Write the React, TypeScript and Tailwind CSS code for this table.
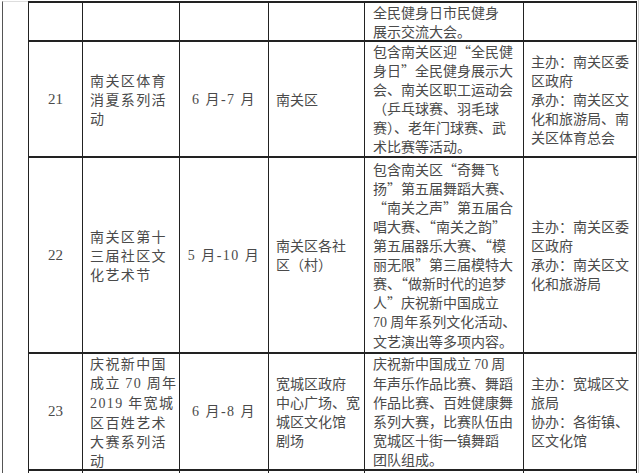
import React from 'react';

type Row = {
  h: string;
  no: string;
  name: string[];
  date: string;
  place: string[];
  content: string[];
  org: string[];
};

// 数字用衬线体，其余用中文字体
const withDigits = (s: string) =>
  s.split(/(\d+)/).map((part, i) =>
    /^\d+$/.test(part) ? (
      <span key={i} className="font-['Liberation_Serif',serif]">
        {part}
      </span>
    ) : (
      <React.Fragment key={i}>{part}</React.Fragment>
    )
  );

const rows: Row[] = [
  {
    h: 'h-[116px]',
    no: '21',
    name: ['南关区体育', '消夏系列活', '动'],
    date: '6 月-7 月',
    place: ['南关区'],
    content: [
      '包含南关区迎“全民健',
      '身日”全民健身展示大',
      '会、南关区职工运动会',
      '（乒乓球赛、羽毛球',
      '赛）、老年门球赛、武',
      '术比赛等活动。',
    ],
    org: ['主办：南关区委', '区政府', '承办：南关区文', '化和旅游局、南', '关区体育总会'],
  },
  {
    h: 'h-[196px]',
    no: '22',
    name: ['南关区第十', '三届社区文', '化艺术节'],
    date: '5 月-10 月',
    place: ['南关区各社', '区（村）'],
    content: [
      '包含南关区“奇舞飞',
      '扬”第五届舞蹈大赛、',
      '“南关之声”第五届合',
      '唱大赛、“南关之韵”',
      '第五届器乐大赛、“模',
      '丽无限”第三届模特大',
      '赛、“做新时代的追梦',
      '人”庆祝新中国成立',
      '70 周年系列文化活动、',
      '文艺演出等多项内容。',
    ],
    org: ['主办：南关区委', '区政府', '承办：南关区文', '化和旅游局'],
  },
  {
    h: 'h-[117px]',
    no: '23',
    name: ['庆祝新中国', '成立 70 周年', '2019 年宽城', '区百姓艺术', '大赛系列活', '动'],
    date: '6 月-8 月',
    place: ['宽城区政府', '中心广场、宽', '城区文化馆', '剧场'],
    content: [
      '庆祝新中国成立 70 周',
      '年声乐作品比赛、舞蹈',
      '作品比赛、百姓健康舞',
      '系列大赛，比赛队伍由',
      '宽城区十街一镇舞蹈',
      '团队组成。',
    ],
    org: ['主办：宽城区文', '旅局', '协办：各街镇、', '区文化馆'],
  },
];

const cell = 'border-r border-b-2 border-[#222] flex flex-col justify-center';

function Lines({ lines }: { lines: string[] }) {
  return (
    <>
      {lines.map((l, i) => (
        <span key={i} className="block whitespace-nowrap">
          {withDigits(l)}
        </span>
      ))}
    </>
  );
}

export default function App() {
  return (
    <div className="w-[640px] h-[473px] bg-white overflow-hidden flex text-[14px] leading-[19px] text-[#4a4a4a] font-['Noto_Sans_CJK_SC',sans-serif]">
      {/* 左侧页边线 */}
      <div className="ml-[2px] w-[26px] shrink-0 border-l-[1.5px] border-[#555] border-t border-t-[#ddd] mt-[1px]" />

      <div className="pt-[1px] shrink-0">
        <div className="grid grid-cols-[54px_97px_89px_96px_159px_113px] border-l border-t-2 border-[#222]">
          {/* 上一行的尾部 */}
          <div className={`${cell} h-[39px]`} />
          <div className={`${cell} h-[39px]`} />
          <div className={`${cell} h-[39px]`} />
          <div className={`${cell} h-[39px]`} />
          <div className={`${cell} h-[39px] pl-[8px]`}>
            <Lines lines={['全民健身日市民健身', '展示交流大会。']} />
          </div>
          <div className={`${cell} h-[39px]`} />

          {rows.map((r) => (
            <React.Fragment key={r.no}>
              <div className={`${cell} ${r.h} items-center font-['Liberation_Serif',serif] text-[15px]`}>
                {r.no}
              </div>
              <div className={`${cell} ${r.h} pl-[7px] tracking-[1.4px]`}>
                <Lines lines={r.name} />
              </div>
              <div className={`${cell} ${r.h} items-center font-['Liberation_Serif','Noto_Sans_CJK_SC',serif] tracking-[1.5px]`}>
                <span className="whitespace-nowrap">{r.date}</span>
              </div>
              <div className={`${cell} ${r.h} pl-[7px]`}>
                <Lines lines={r.place} />
              </div>
              <div className={`${cell} ${r.h} pl-[8px]`}>
                <Lines lines={r.content} />
              </div>
              <div className={`${cell} ${r.h} pl-[7px]`}>
                <Lines lines={r.org} />
              </div>
            </React.Fragment>
          ))}

          {/* 下一行的开头 */}
          <div className={`${cell} h-[20px]`} />
          <div className={`${cell} h-[20px]`} />
          <div className={`${cell} h-[20px]`} />
          <div className={`${cell} h-[20px]`} />
          <div className={`${cell} h-[20px]`} />
          <div className={`${cell} h-[20px]`} />
        </div>
      </div>

      <div className="ml-[1px] w-px h-full bg-[#ccc]" />
    </div>
  );
}
